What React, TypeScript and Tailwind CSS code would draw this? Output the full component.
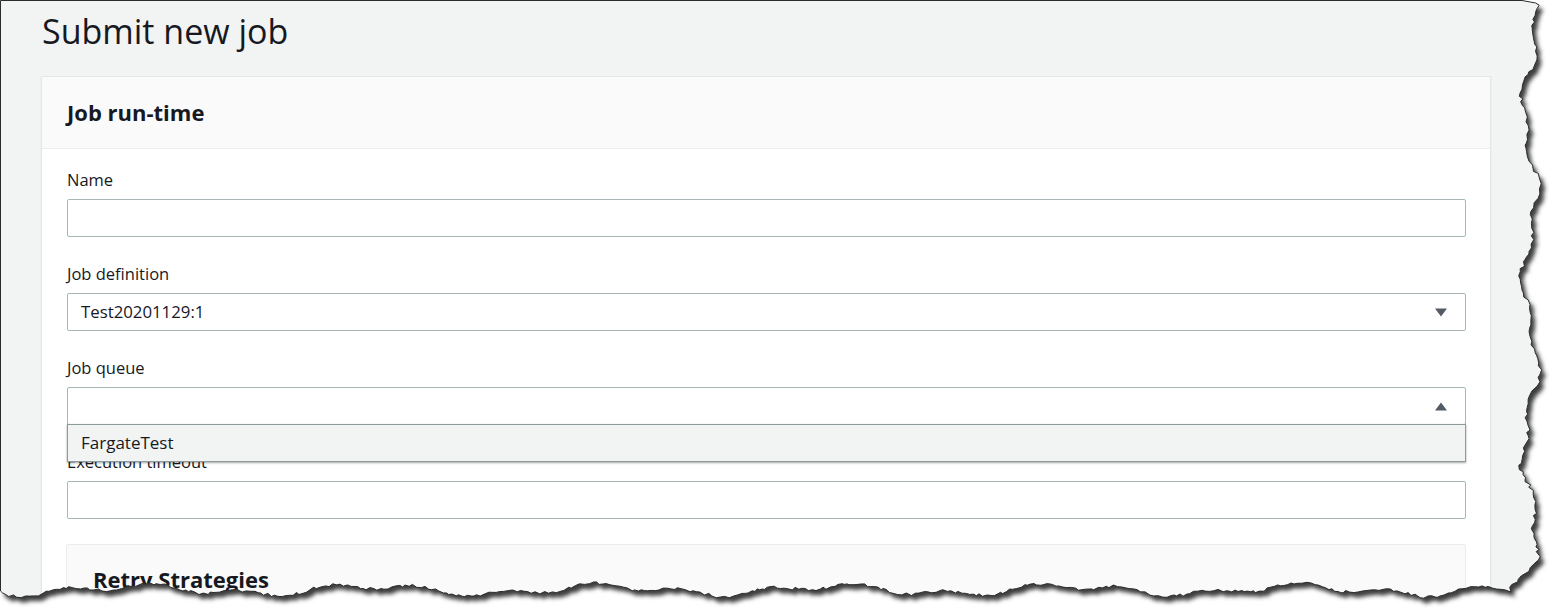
import React from 'react';

function seeded(seed: number) {
  return () => {
    seed |= 0;
    seed = (seed + 0x6d2b79f5) | 0;
    let t = Math.imul(seed ^ (seed >>> 15), 1 | seed);
    t = (t + Math.imul(t ^ (t >>> 7), 61 | t)) ^ t;
    return ((t ^ (t >>> 14)) >>> 0) / 4294967296;
  };
}

// torn paper edge on the right and bottom of the screenshot
function tornPaths() {
  const r = seeded(7);
  const pts: [number, number][] = [[0.5, 0.5], [1522, 0.5]];
  for (let y = 3; y < 588; y += 2 + r() * 3) {
    const x = 1530 + 7 * Math.sin(y / 27 + 0.6) + 4 * Math.sin(y / 10 + 2) + (r() - 0.5) * 4 - (y > 560 ? (y - 560) * 0.5 : 0);
    pts.push([x, y]);
  }
  pts.push([1511, 592]);
  for (let x = 1505; x > 2; x -= 2 + r() * 3) {
    const y = 590 + 4 * Math.sin(x / 37 + 1) + 3 * Math.sin(x / 14) + (r() - 0.5) * 3;
    pts.push([x, y]);
  }
  pts.push([0.5, 591]);
  const paper = 'M' + pts.map(([x, y]) => `${x.toFixed(1)} ${y.toFixed(1)}`).join(' L') + ' Z';
  const outside = 'M0 0 H1550 V608 H0 Z ' + paper;
  return { paper, outside };
}

const { paper, outside } = tornPaths();

function Caret({ up }: { up?: boolean }) {
  return (
    <svg width="12" height="9" viewBox="0 0 12 9" className="shrink-0">
      <path d={up ? 'M6 0.5 L12 8.5 L0 8.5 Z' : 'M0 0.5 L12 0.5 L6 8.5 Z'} fill="#545b64" />
    </svg>
  );
}

function Label({ children }: { children: React.ReactNode }) {
  return <div className="h-[21px] leading-[21px] text-[16.5px] text-[#16191f] mb-[9px]">{children}</div>;
}

function TextInput() {
  return <div className="h-[38px] rounded-[2px] border border-[#aab7b8] bg-white" />;
}

export default function App() {
  return (
    <div className="relative w-[1550px] h-[608px] overflow-hidden bg-white font-['Open_Sans','Noto_Sans',sans-serif]">
      <div className="h-full bg-[#f2f3f3] pl-[41px] pr-[59px]">
        <h1 className="pt-[10px] h-[76px] text-[34px] leading-[42px] text-[#16191f] pl-px">Submit new job</h1>
        <div className="bg-white border border-[#e4e7e7] shadow-[0_1px_1px_rgba(0,0,0,0.1)]">
          <div className="h-[72px] bg-[#fafafa] border-b border-[#eaeded] flex items-center px-[25px]">
            <h2 className="text-[22px] font-bold text-[#16191f]">Job run-time</h2>
          </div>
          <div className="pt-[20px] pl-[25px] pr-[24px] flex flex-col gap-[26px]">
            <div>
              <Label>Name</Label>
              <TextInput />
            </div>
            <div>
              <Label>Job definition</Label>
              <div className="h-[38px] rounded-[2px] border border-[#aab7b8] bg-white flex items-center justify-between pl-[13px] pr-[18px] text-[16.8px] text-[#16191f]">
                <span>Test20201129:1</span>
                <Caret />
              </div>
            </div>
            <div className="relative z-10">
              <Label>Job queue</Label>
              <div className="h-[38px] rounded-[2px] border border-[#aab7b8] bg-white flex items-center justify-end pr-[18px]">
                <Caret up />
              </div>
              <div className="absolute left-0 right-0 top-[calc(100%-1px)] h-[38px] bg-[#f2f3f3] border border-[#8c9a9b] shadow-[0_1px_2px_rgba(0,0,0,0.35)] flex items-center pl-[13px] text-[17px] text-[#16191f]">
                FargateTest
              </div>
            </div>
            <div>
              <Label>Execution timeout</Label>
              <TextInput />
            </div>
            <div className="h-[120px] -ml-px -mt-px bg-[#fafafa] border border-[#eaeded] rounded-[2px] pl-[26px] pt-[18px]">
              <h3 className="text-[22px] font-bold text-[#16191f] leading-[32px]">Retry Strategies</h3>
            </div>
          </div>
        </div>
      </div>
      <svg className="absolute inset-0 pointer-events-none z-20" width="1550" height="608">
        <defs>
          <filter id="blur" x="-5%" y="-5%" width="110%" height="110%">
            <feGaussianBlur stdDeviation="2.2" />
          </filter>
          <clipPath id="out">
            <path d={outside} clipRule="evenodd" />
          </clipPath>
        </defs>
        <path d={outside} fill="#fff" fillRule="evenodd" />
        <g clipPath="url(#out)">
          <path d={paper} fill="#3c3c3c" transform="translate(4 5)" filter="url(#blur)" />
        </g>
        <path d={paper} fill="none" stroke="#2b2b2b" strokeWidth="1" />
      </svg>
    </div>
  );
}
